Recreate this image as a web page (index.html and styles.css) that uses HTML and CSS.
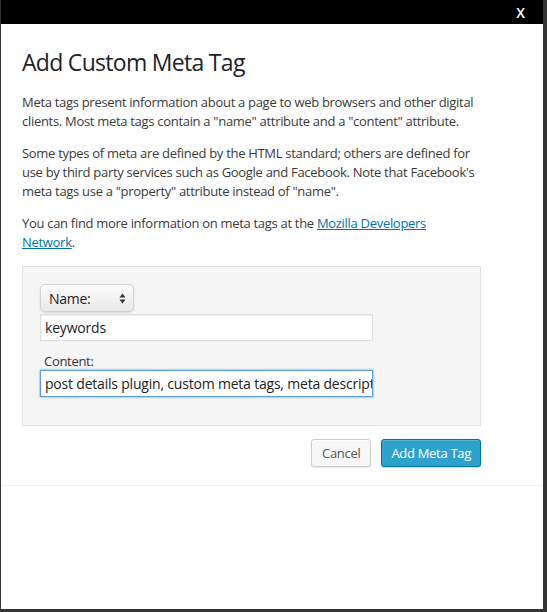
FILE: index.html
```html
<!DOCTYPE html>
<html lang="en">
<head>
<meta charset="utf-8">
<title>Add Custom Meta Tag</title>
<link rel="stylesheet" href="styles.css">
</head>
<body>
<div class="dialog">
  <div class="titlebar"><span class="close">X</span></div>
  <div class="main">
    <h1 class="title">Add Custom Meta Tag</h1>
    <p class="text">Meta tags present information about a page to web browsers and other digital clients. Most meta tags contain a "name" attribute and a "content" attribute.</p>
    <p class="text">Some types of meta are defined by the HTML standard; others are defined for use by third party services such as Google and Facebook. Note that Facebook's meta tags use a "property" attribute instead of "name".</p>
    <p class="text">You can find more information on meta tags at the <a class="link" href="#">Mozilla Developers Network</a>.</p>
    <div class="box">
      <div class="select">
        <span class="select-label">Name:</span>
        <svg class="select-arrows" width="7" height="11" viewBox="0 0 7 11"><path d="M3.5 0.5 L6.5 4.5 L0.5 4.5 Z" fill="#333"/><path d="M3.5 10.5 L6.5 6.5 L0.5 6.5 Z" fill="#333"/></svg>
      </div>
      <div class="input">keywords</div>
      <div class="label">Content:</div>
      <div class="input focused">post details plugin, custom meta tags, meta description</div>
    </div>
    <div class="actions">
      <span class="btn btn-secondary">Cancel</span>
      <span class="btn btn-primary">Add Meta Tag</span>
    </div>
  </div>
</div>
</body>
</html>
```
FILE: styles.css
```css
html, body {
  margin: 0;
  padding: 0;
}
body {
  background: #353535;
  width: 547px;
  height: 612px;
  overflow: hidden;
  font-family: "Open Sans", "Liberation Sans", sans-serif;
  letter-spacing: -0.3px;
  color: #333;
}
.dialog {
  margin-left: 1px;
  width: 542px;
  height: 609px;
  background: #fff;
}
.titlebar {
  height: 24px;
  background: #000;
  display: flex;
  justify-content: flex-end;
  align-items: center;
  padding-right: 18px;
}
.close {
  color: #fff;
  font-size: 14px;
  font-weight: 600;
  letter-spacing: 0;
  line-height: 24px;
  margin-top: 2px;
}
.main {
  padding: 0 62px 18px 21px;
  border-bottom: 1px solid #f1f1f1;
}
.title {
  margin: 23px 0 15px;
  font-size: 23px;
  font-weight: 400;
  letter-spacing: -0.7px;
  line-height: 31px;
  color: #222;
}
.text {
  margin: 0 0 13px;
  font-size: 13px;
  line-height: 19px;
  color: #3a3a3a;
}
.link {
  color: #0074a2;
  text-decoration: underline;
}
.box {
  margin-top: 14px;
  background: #f5f5f5;
  border: 1px solid #e3e3e3;
  padding: 17px 17px 28px;
}
.select {
  width: 94px;
  height: 28px;
  box-sizing: border-box;
  border-radius: 5px;
  border: 1px solid #d2d2d2;
  background: linear-gradient(#fbfbfb, #e9e9e9);
  box-shadow: 0 1px 2px rgba(0,0,0,0.12);
  display: flex;
  align-items: center;
  justify-content: space-between;
  padding: 0 7px 0 8px;
}
.select-label {
  font-size: 14px;
  color: #222;
}
.select-arrows {
  display: block;
}
.input {
  margin-top: 2px;
  width: 333px;
  height: 27px;
  box-sizing: border-box;
  border: 1px solid #ddd;
  background: #fff;
  box-shadow: inset 0 1px 2px rgba(0,0,0,0.07);
  padding: 0 4px;
  font-size: 14px;
  letter-spacing: -0.2px;
  line-height: 25px;
  color: #222;
  white-space: nowrap;
  overflow: hidden;
}
.focused {
  margin-top: 0;
  border-color: #5b9dd9;
  box-shadow: 0 0 2px rgba(30,140,190,0.8);
}
.label {
  margin-top: 12px;
  padding-left: 4px;
  font-size: 13px;
  line-height: 17px;
  color: #333;
}
.actions {
  margin-top: 13px;
  display: flex;
  justify-content: flex-end;
  gap: 10px;
}
.btn {
  height: 28px;
  box-sizing: border-box;
  border-radius: 3px;
  font-size: 13px;
  line-height: 26px;
  padding: 0 10px;
  border: 1px solid;
}
.btn-secondary {
  color: #555;
  background: #f7f7f7;
  border-color: #cccccc;
  box-shadow: inset 0 1px 0 #fff, 0 1px 0 rgba(0,0,0,0.08);
}
.btn-primary {
  color: #fff;
  background: #2ea2cc;
  border-color: #0074a2;
  padding: 0 9px;
  box-shadow: inset 0 1px 0 rgba(120,200,230,0.5), 0 1px 0 rgba(0,0,0,0.15);
}
```
